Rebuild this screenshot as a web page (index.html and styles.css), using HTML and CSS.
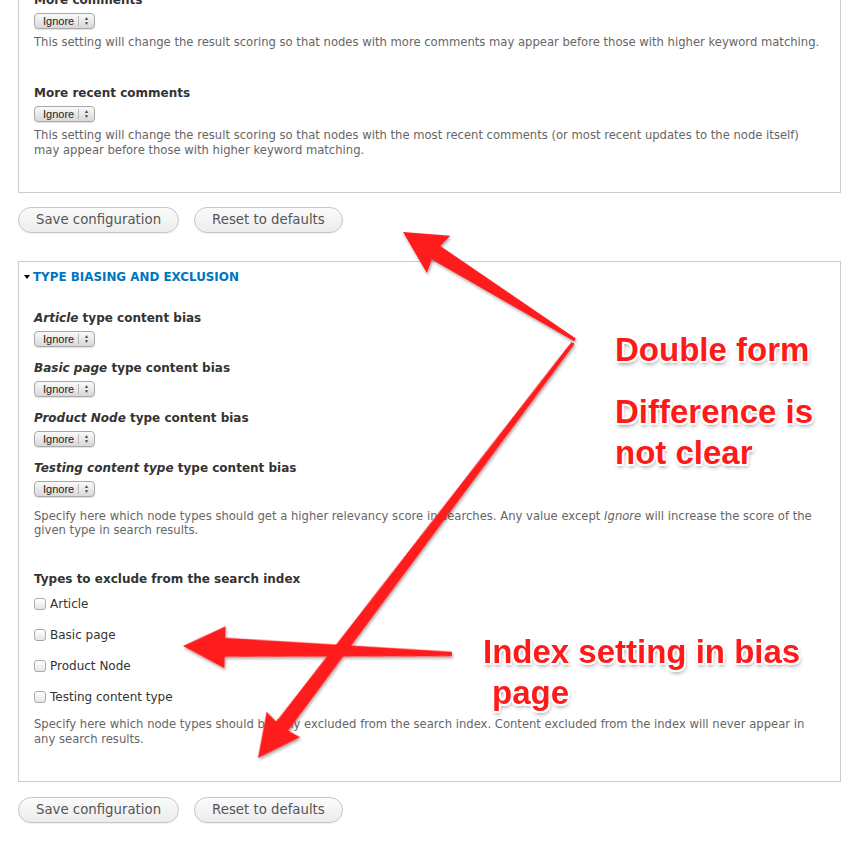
FILE: index.html
```html
<!DOCTYPE html>
<html>
<head>
<meta charset="utf-8">
<title>Search settings</title>
<link rel="stylesheet" href="styles.css">
</head>
<body>
<div class="page">
  <div class="fieldset fieldset-top">
    <div class="item">
      <div class="label">More comments</div>
      <span class="select"><span class="select-text">Ignore</span><span class="select-arrows">&#9650;<br>&#9660;</span></span>
      <div class="desc">This setting will change the result scoring so that nodes with more comments may appear before those with higher keyword matching.</div>
    </div>
    <div class="item">
      <div class="label">More recent comments</div>
      <span class="select"><span class="select-text">Ignore</span><span class="select-arrows">&#9650;<br>&#9660;</span></span>
      <div class="desc">This setting will change the result scoring so that nodes with the most recent comments (or most recent updates to the node itself) may appear before those with higher keyword matching.</div>
    </div>
  </div>
  <div class="actions actions-first">
    <span class="button">Save configuration</span>
    <span class="button">Reset to defaults</span>
  </div>

  <div class="fieldset fieldset-bias">
    <div class="legend"><span class="legend-arrow"></span>TYPE BIASING AND EXCLUSION</div>
    <div class="bias-list">
      <div class="bias-item">
        <div class="label"><em>Article</em> type content bias</div>
        <span class="select"><span class="select-text">Ignore</span><span class="select-arrows">&#9650;<br>&#9660;</span></span>
      </div>
      <div class="bias-item">
        <div class="label"><em>Basic page</em> type content bias</div>
        <span class="select"><span class="select-text">Ignore</span><span class="select-arrows">&#9650;<br>&#9660;</span></span>
      </div>
      <div class="bias-item">
        <div class="label"><em>Product Node</em> type content bias</div>
        <span class="select"><span class="select-text">Ignore</span><span class="select-arrows">&#9650;<br>&#9660;</span></span>
      </div>
      <div class="bias-item">
        <div class="label"><em>Testing content type</em> type content bias</div>
        <span class="select"><span class="select-text">Ignore</span><span class="select-arrows">&#9650;<br>&#9660;</span></span>
      </div>
    </div>
    <div class="desc desc-bias">Specify here which node types should get a higher relevancy score in searches. Any value except <em>Ignore</em> will increase the score of the given type in search results.</div>

    <div class="label label-exclude">Types to exclude from the search index</div>
    <div class="checks">
      <div class="check"><span class="box"></span>Article</div>
      <div class="check"><span class="box"></span>Basic page</div>
      <div class="check"><span class="box"></span>Product Node</div>
      <div class="check"><span class="box"></span>Testing content type</div>
    </div>
    <div class="desc desc-exclude">Specify here which node types should be fully excluded from the search index. Content excluded from the index will never appear in any search results.</div>
  </div>
  <div class="actions">
    <span class="button">Save configuration</span>
    <span class="button">Reset to defaults</span>
  </div>
</div>

<svg class="arrows" width="854" height="846" viewBox="0 0 854 846">
  <defs>
    <filter id="sh" x="-20%" y="-20%" width="140%" height="140%">
      <feDropShadow dx="1" dy="2" stdDeviation="1.5" flood-color="#000" flood-opacity="0.35"/>
    </filter>
  </defs>
  <g fill="#ff1c1c" filter="url(#sh)">
    <polygon transform="translate(403 232) rotate(32.1)" points="0,0 42,-22 39,-8 203,-1.5 203,1.5 39,8 42,22"/>
    <polygon transform="translate(258 758) rotate(-52.8)" points="0,0 42,-21 40,-7.5 521,-1.8 521,1.8 40,7.5 42,21"/>
    <polygon transform="translate(183 646) rotate(1.7)" points="0,0 42,-21 42,-9.5 269,-2.2 269,2.2 42,9.5 42,21"/>
  </g>
</svg>

<div class="note note-double">Double form</div>
<div class="note note-diff">Difference is<br>not clear</div>
<div class="note note-index">Index setting in bias<span class="note-indent">page</span></div>
</body>
</html>
```

FILE: styles.css
```css
html, body {
  margin: 0;
  padding: 0;
  background: #fff;
}
body {
  position: relative;
  width: 854px;
  height: 846px;
  overflow: hidden;
  font-family: "DejaVu Sans", "Liberation Sans", sans-serif;
  color: #333;
}
.page {
  padding: 0 13px 0 18px;
}
.fieldset {
  border: 1px solid #ccc;
  padding: 0 15px;
}
.fieldset-top {
  margin-top: -30px;
  padding-top: 21px;
  padding-bottom: 34px;
  border-top: none;
}
.item + .item {
  margin-top: 34.5px;
}
.label {
  font-size: 12px;
  font-weight: bold;
  line-height: 18px;
  color: #333;
}
.label em {
  font-style: italic;
}
.select {
  display: inline-flex;
  align-items: stretch;
  width: 61px;
  height: 16px;
  box-sizing: border-box;
  margin-top: 4px;
  border: 1px solid #a9a9a9;
  border-radius: 4px;
  background: linear-gradient(#fafafa, #e9e9e9 50%, #d9d9d9);
  box-shadow: 0 1px 1px rgba(0,0,0,0.12);
  font-family: "Liberation Sans", sans-serif;
  font-size: 11px;
  color: #222;
  vertical-align: top;
}
.select-text {
  flex: 1;
  padding-left: 8px;
  line-height: 14px;
}
.select-arrows {
  width: 15px;
  border-left: 1px solid #b8b8b8;
  margin: 2px 0;
  font-size: 5px;
  line-height: 5px;
  text-align: center;
  color: #444;
}
.item .select,
.bias-item .select {
  display: flex;
}
.desc {
  font-size: 11.6px;
  line-height: 15px;
  color: #666;
  margin-top: 5.5px;
}
.desc em {
  font-style: italic;
}
.actions {
  display: flex;
  gap: 15px;
  padding: 15px 0 0;
}
.actions-first {
  padding: 14px 0 28px;
}
.button {
  display: inline-block;
  height: 26px;
  box-sizing: border-box;
  padding: 0 17px;
  border: 1px solid #c6c6c6;
  border-radius: 14px;
  background: linear-gradient(#fbfbfb, #ececec);
  box-shadow: 0 1px 1px rgba(0,0,0,0.06);
  font-family: "DejaVu Sans", sans-serif;
  font-size: 13.3px;
  line-height: 24px;
  color: #555;
}
.fieldset-bias {
  padding-top: 7px;
  padding-bottom: 34px;
}
.legend {
  display: flex;
  align-items: center;
  font-size: 11.9px;
  font-weight: bold;
  line-height: 16px;
  color: #0074bd;
  margin-left: -10px;
}
.legend-arrow {
  width: 0;
  height: 0;
  border-left: 3.5px solid transparent;
  border-right: 3.5px solid transparent;
  border-top: 4px solid #000;
  margin-right: 3px;
}
.bias-list {
  margin-top: 24px;
}
.bias-item + .bias-item {
  margin-top: 12px;
}
.desc-bias {
  margin-top: 12px;
  line-height: 14px;
}
.label-exclude {
  margin-top: 33px;
}
.checks {
  margin-top: 7px;
  display: flex;
  flex-direction: column;
  gap: 13px;
}
.check {
  display: flex;
  align-items: center;
  height: 18px;
  font-size: 12px;
  color: #333;
}
.box {
  width: 12px;
  height: 12px;
  box-sizing: border-box;
  border: 1px solid #aaa;
  border-radius: 3px;
  background: linear-gradient(#fff, #e6e6e6);
  margin-right: 4px;
}
.desc-exclude {
  margin-top: 11px;
}
.arrows {
  position: absolute;
  left: 0;
  top: 0;
  pointer-events: none;
}
.note {
  position: absolute;
  font-family: "Liberation Sans", Arial, sans-serif;
  font-weight: bold;
  font-size: 33px;
  line-height: 41px;
  color: #ff1a1a;
  white-space: nowrap;
  text-shadow:
    -2px 0 #fff, 2px 0 #fff, 0 -2px #fff, 0 2px #fff,
    -1.5px -1.5px #fff, 1.5px 1.5px #fff, -1.5px 1.5px #fff, 1.5px -1.5px #fff,
    1px 3px 4px rgba(0,0,0,0.45);
}
.note-double {
  left: 615px;
  top: 329px;
}
.note-diff {
  left: 615px;
  top: 391px;
}
.note-index {
  left: 483px;
  top: 631px;
}
.note-indent {
  display: block;
  padding-left: 9px;
}
```
